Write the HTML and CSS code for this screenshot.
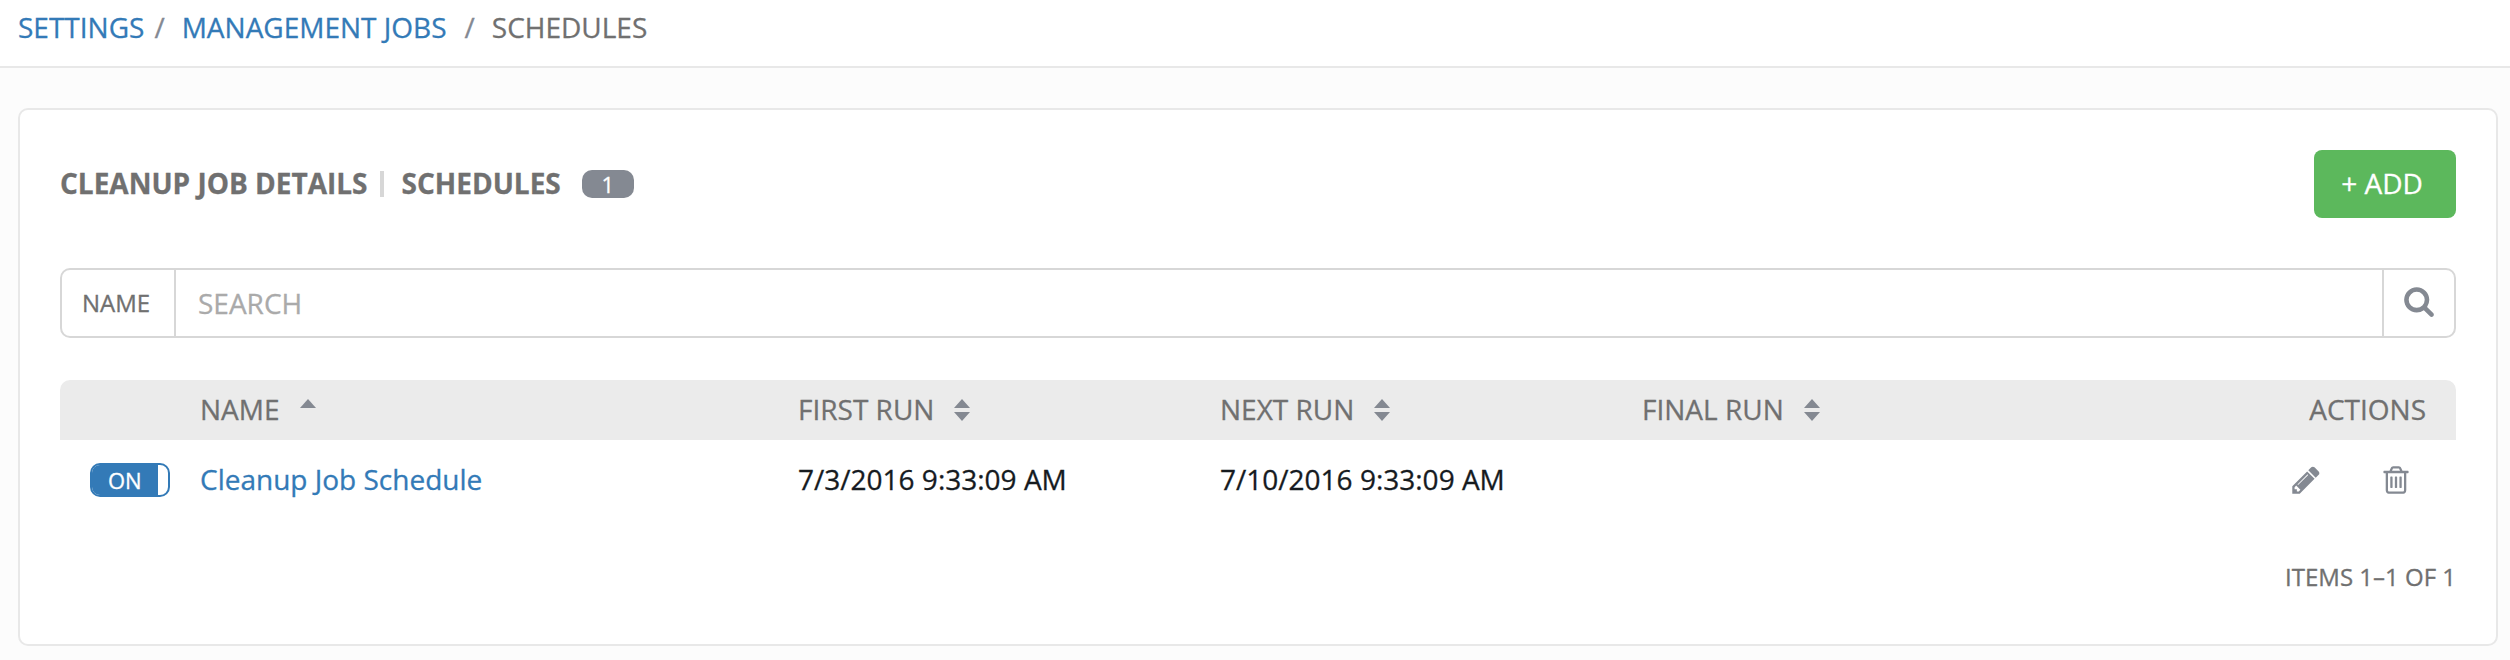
FILE: index.html
```html
<!DOCTYPE html>
<html lang="en">
<head>
    <meta charset="UTF-8">
    <meta name="viewport" content="width=device-width, initial-scale=1.0">
    <title>Schedules</title>
    <link rel="stylesheet" href="styles.css">
</head>
<body>

    <nav class="breadcrumb">
        <a href="#">SETTINGS</a>
        <span class="slash first">/</span>
        <a href="#">MANAGEMENT JOBS</a>
        <span class="slash">/</span>
        <span class="current">SCHEDULES</span>
    </nav>

    <div class="panel">
        <div class="panel-header">
            <h1 class="title">CLEANUP JOB DETAILS</h1>
            <span class="divider"></span>
            <h1 class="title">SCHEDULES</h1>
            <span class="badge">1</span>
            <button class="add-btn">+ ADD</button>
        </div>

        <div class="search-bar">
            <span class="search-key">NAME</span>
            <input class="search-input" type="text" placeholder="SEARCH">
            <button class="search-btn" aria-label="Search">
                <svg class="icon" viewBox="0 0 1792 1792"><path d="M1216 832q0-185-131.5-316.5t-316.5-131.5-316.5 131.5-131.5 316.5 131.5 316.5 316.5 131.5 316.5-131.5 131.5-316.5zm512 832q0 52-38 90t-90 38q-54 0-90-38l-343-342q-179 124-399 124-143 0-273.5-55.5t-225-150-150-225-55.5-273.5 55.5-273.5 150-225 225-150 273.5-55.5 273.5 55.5 225 150 150 225 55.5 273.5q0 220-124 399l343 343q37 37 37 90z"/></svg>
            </button>
        </div>

        <table class="schedules">
            <thead>
                <tr>
                    <th class="col-toggle"></th>
                    <th class="col-name">NAME<svg class="sort" viewBox="0 0 16 22"><path d="M8 0l8 9H0z"/></svg></th>
                    <th class="col-run">FIRST RUN<svg class="sort" viewBox="0 0 16 22"><path d="M8 0l8 9H0zM0 13h16l-8 9z"/></svg></th>
                    <th class="col-run">NEXT RUN<svg class="sort" viewBox="0 0 16 22"><path d="M8 0l8 9H0zM0 13h16l-8 9z"/></svg></th>
                    <th>FINAL RUN<svg class="sort" viewBox="0 0 16 22"><path d="M8 0l8 9H0zM0 13h16l-8 9z"/></svg></th>
                    <th class="col-actions">ACTIONS</th>
                </tr>
            </thead>
            <tbody>
                <tr>
                    <td class="col-toggle"><div class="toggle"><span class="toggle-on">ON</span></div></td>
                    <td class="text"><a href="#">Cleanup Job Schedule</a></td>
                    <td class="text">7/3/2016 9:33:09 AM</td>
                    <td class="text">7/10/2016 9:33:09 AM</td>
                    <td></td>
                    <td>
                        <div class="actions">
                            <svg class="icon" viewBox="0 0 1792 1792"><path d="M491 1536l91-91-235-235-91 91v107h128v128h107zm523-928q0-22-22-22-10 0-17 7l-542 542q-7 7-7 17 0 22 22 22 10 0 17-7l542-542q7-7 7-17zm-54-192l416 416-832 832h-416v-416zm683 96q0 53-37 90l-166 166-416-416 166-165q36-38 90-38 53 0 91 38l235 234q37 39 37 91z"/></svg>
                            <svg class="icon" viewBox="0 0 1792 1792"><path d="M704 736v576q0 14-9 23t-23 9h-64q-14 0-23-9t-9-23v-576q0-14 9-23t23-9h64q14 0 23 9t9 23zm256 0v576q0 14-9 23t-23 9h-64q-14 0-23-9t-9-23v-576q0-14 9-23t23-9h64q14 0 23 9t9 23zm256 0v576q0 14-9 23t-23 9h-64q-14 0-23-9t-9-23v-576q0-14 9-23t23-9h64q14 0 23 9t9 23zm128 724v-948h-896v948q0 22 7 40.5t14.5 27 10.5 8.5h832q3 0 10.5-8.5t14.5-27 7-40.5zm-672-1076h448l-48-117q-7-9-17-11h-317q-10 2-17 11zm928 32v64q0 14-9 23t-23 9h-96v948q0 83-47 143.5t-113 60.5h-832q-66 0-113-58.5t-47-141.5v-952h-96q-14 0-23-9t-9-23v-64q0-14 9-23t23-9h309l70-167q15-37 54-63t79-26h320q40 0 79 26t54 63l70 167h309q14 0 23 9t9 23z"/></svg>
                        </div>
                    </td>
                </tr>
            </tbody>
        </table>

        <div class="items">ITEMS 1–1 OF 1</div>
    </div>

</body>
</html>
```

FILE: styles.css
```css
* {
    box-sizing: border-box;
}

body {
    margin: 0;
    background-color: #fcfcfc;
    color: #161b1f;
    font-family: "Open Sans", sans-serif;
    font-size: 28px;
    line-height: 40px;
    -webkit-text-stroke: 0.3px;
}

a {
    color: #337ab7;
    text-decoration: none;
}

button {
    font-family: inherit;
    cursor: pointer;
}

.icon {
    display: block;
    width: 32px;
    height: 32px;
    fill: #848992;
}

/* Breadcrumb */
.breadcrumb {
    display: flex;
    height: 68px;
    padding: 7px 18px 0;
    background-color: white;
    border-bottom: 2px solid #e8e8e8;
    color: #707070;
}

.slash {
    margin: 0 17px 0 18px;
    color: #848992;
}

.slash.first {
    margin-left: 10px;
    margin-right: 17px;
}

/* Panel */
.panel {
    height: 538px;
    margin: 40px 12px 0 18px;
    padding: 40px;
    background-color: white;
    border: 2px solid #e8e8e8;
    border-radius: 10px;
}

.panel-header {
    display: flex;
    align-items: center;
    height: 68px;
}

.title {
    margin: 0;
    padding-bottom: 2px;
    color: #707070;
    font-size: 28px;
    font-weight: 700;
}

.divider {
    width: 4px;
    height: 26px;
    margin: 0 18px 0 12px;
    background-color: #d7d7d7;
}

.badge {
    width: 52px;
    height: 28px;
    margin-left: 21px;
    border-radius: 10px;
    background-color: #848992;
    color: white;
    font-size: 22px;
    line-height: 28px;
    text-align: center;
}

.add-btn {
    width: 142px;
    height: 68px;
    margin-left: auto;
    padding: 0 6px 2px 0;
    border: none;
    border-radius: 8px;
    background-color: #5cb85c;
    color: white;
    font-size: 28px;
}

/* Search */
.search-bar {
    display: flex;
    height: 70px;
    margin-top: 50px;
    border: 2px solid #d7d7d7;
    border-radius: 10px;
}

.search-key {
    width: 114px;
    padding-left: 20px;
    border-right: 2px solid #d7d7d7;
    color: #707070;
    font-size: 24px;
    line-height: 66px;
}

.search-input {
    flex: 1;
    padding: 0 22px 1px;
    border: none;
    background: none;
    font-family: inherit;
    font-size: 28px;
    outline: none;
}

.search-input::placeholder {
    color: #aaa;
}

.search-btn {
    width: 72px;
    padding: 0 0 5px 19px;
    border: none;
    border-left: 2px solid #d7d7d7;
    background: none;
}

/* Table */
.schedules {
    width: 100%;
    margin-top: 42px;
    border-collapse: separate;
    border-spacing: 0;
    table-layout: fixed;
}

.schedules th {
    height: 60px;
    padding: 0 0 2px;
    background-color: #ebebeb;
    color: #707070;
    font-weight: 400;
    text-align: left;
}

.schedules th:first-child {
    border-top-left-radius: 10px;
}

.schedules th:last-child {
    border-top-right-radius: 10px;
}

.schedules td {
    height: 80px;
    padding: 0;
}

.schedules .text {
    padding-bottom: 2px;
}

.schedules .col-toggle {
    width: 140px;
    padding-left: 30px;
}

.schedules .col-name {
    width: 598px;
}

.schedules .col-run {
    width: 422px;
}

.schedules .col-actions {
    padding-right: 30px;
    text-align: right;
}

.sort {
    width: 16px;
    height: 22px;
    margin-left: 20px;
    fill: #848992;
    vertical-align: -1px;
}

.toggle {
    width: 80px;
    height: 34px;
    border: 2px solid #337ab7;
    border-radius: 10px;
    overflow: hidden;
}

.toggle-on {
    display: block;
    width: 66px;
    padding-left: 16px;
    background-color: #337ab7;
    color: white;
    font-size: 22px;
    line-height: 30px;
}

.actions {
    display: flex;
    justify-content: flex-end;
    gap: 58px;
    padding-right: 44px;
}

.items {
    margin-top: 37px;
    color: #707070;
    font-size: 24px;
    text-align: right;
}
```
